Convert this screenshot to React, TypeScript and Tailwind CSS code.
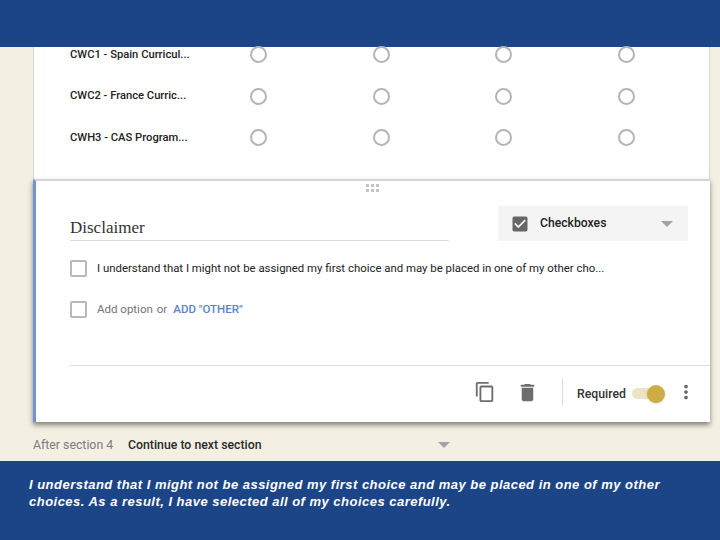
import { MdCheckBox, MdContentCopy, MdDelete, MdMoreVert } from 'react-icons/md';

const rows = ['CWC1 - Spain Curricul...', 'CWC2 - France Curric...', 'CWH3 - CAS Program...'];

function Radio() {
  return <div className="size-[17px] rounded-full border-2 border-[#b5b5b5]" />;
}

function Arrow() {
  return <div className="h-0 w-0 border-x-[6px] border-t-[6px] border-x-transparent border-t-[#a3a3a3]" />;
}

function Checkbox() {
  return <div className="size-[17px] shrink-0 rounded-[2px] border-2 border-[#b9b9b9]" />;
}

export default function App() {
  return (
    <div className="flex h-[540px] w-[720px] flex-col overflow-hidden bg-[#f3f0e3] font-['Roboto',sans-serif]">
      <header className="h-[47px] shrink-0 bg-[#1c4587]" />

      <main className="flex-1 pl-[33px] pr-[10px]">
        <section className="h-[132px] border-x border-[#d8d6cc] bg-white pl-[36px] pt-[1px]">
          {rows.map((row) => (
            <div key={row} className="flex h-[41.5px] items-center first:-mt-[14px]">
              <span className="w-[127px] shrink-0 pt-[1px] text-[11.2px] font-medium text-[#222]">{row}</span>
              {[0, 1, 2, 3].map((n) => (
                <div key={n} className="flex w-[122.8px] justify-center">
                  <Radio />
                </div>
              ))}
            </div>
          ))}
        </section>

        <section className="h-[243px] border-t-2 border-l-[3px] border-t-[#d5d5d5] border-l-[#6f94d2] bg-white shadow-[0_3px_5px_rgba(60,55,40,0.6)]">
          <div className="flex justify-center pr-[2px] pt-[3px]">
            <div className="grid grid-cols-3 gap-x-[2px] gap-y-[2px]">
              {[0, 1, 2, 3, 4, 5].map((n) => (
                <div key={n} className="size-[3px] bg-[#c4c4c4]" />
              ))}
            </div>
          </div>

          <div className="mt-[14px] flex items-end pl-[34px] pr-[22px]">
            <div className="w-[379px] border-b border-[#dcdcdc] pb-[2px] font-['Liberation_Serif',serif] text-[17px] leading-5 text-[#333]">
              Disclaimer
            </div>
            <div className="ml-[49px] flex h-[35px] w-[190px] items-center bg-[#f4f4f4] pl-[13px] pr-[15px]">
              <MdCheckBox size={20} className="-ml-[1px] text-[#666]" />
              <span className="ml-[10px] flex-1 text-[12.2px] font-medium text-[#222]">Checkboxes</span>
              <Arrow />
            </div>
          </div>

          <div className="mt-[19px] flex items-center pl-[34px]">
            <Checkbox />
            <span className="ml-[10px] text-[11.4px] text-[#222]">
              I understand that I might not be assigned my first choice and may be placed in one of my other cho...
            </span>
          </div>

          <div className="mt-[24px] flex items-center pl-[34px] text-[11.5px]">
            <Checkbox />
            <span className="ml-[10px] text-[#757575]">Add option</span>
            <span className="ml-[4px] text-[#757575]">or</span>
            <span className="ml-[6px] font-medium text-[#5b83c9]">ADD "OTHER"</span>
          </div>

          <div className="ml-[34px] mt-[47px] flex h-[53px] items-center border-t border-[#dcdcdc] pl-[404px]">
            <MdContentCopy size={22} className="text-[#6d6d6d]" />
            <MdDelete size={23} className="ml-[20px] text-[#6d6d6d]" />
            <div className="ml-[23px] h-[28px] border-l border-[#dcdcdc]" />
            <span className="ml-[14px] mt-[4px] text-[12.3px] font-medium text-[#333]">Required</span>
            <div className="relative ml-[6px] mt-[3px] h-[11px] w-[26px] rounded-full bg-[#ece4c4]">
              <div className="absolute -right-[7px] -top-[3px] size-[18px] rounded-full bg-[#cdac45] shadow-sm" />
            </div>
            <MdMoreVert size={22} className="ml-[17px] text-[#666]" />
          </div>
        </section>

        <div className="mt-[14px] flex items-center">
          <span className="w-[95px] shrink-0 text-[12.3px] text-[#7b7b7b]">After section 4</span>
          <span className="w-[310px] shrink-0 text-[12.3px] font-medium text-[#2a2a2a]">Continue to next section</span>
          <Arrow />
        </div>
      </main>

      <footer className="h-[79px] shrink-0 bg-[#1c4587] pl-[29px] pt-[15px] font-['Liberation_Sans',sans-serif] text-[13px] font-bold italic leading-[17px] tracking-[0.48px] text-white">
        I understand that I might not be assigned my first choice and may be placed in one of my other
        <br />
        choices. As a result, I have selected all of my choices carefully.
      </footer>
    </div>
  );
}
